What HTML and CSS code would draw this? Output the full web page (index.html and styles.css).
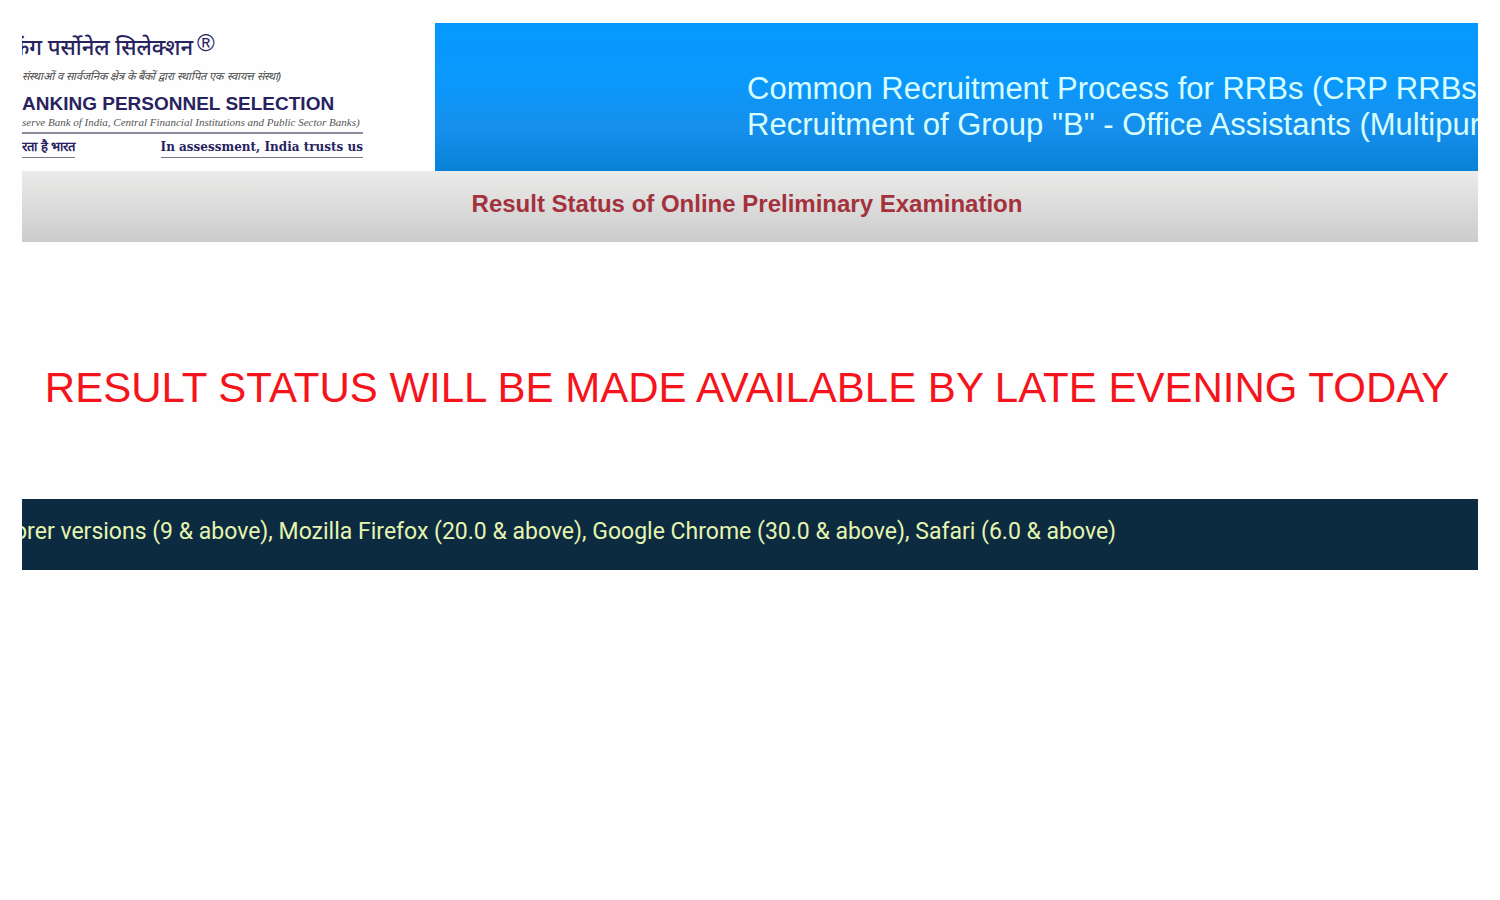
FILE: index.html
```
<!DOCTYPE html>
<html lang="en">
<head>
    <meta charset="UTF-8">
    <meta name="viewport" content="width=device-width, initial-scale=1.0">
    <title>Result Status of Online Preliminary Examination</title>
    <link rel="stylesheet" href="styles.css">
</head>
<body>
    <div class="page">
        <header class="header">
            <div class="logo">
                <p class="logo-hindi" lang="hi"><span class="cut">किंग</span> पर्सोनेल सिलेक्शन<sup>®</sup></p>
                <p class="logo-hindi-sub" lang="hi">संस्थाओं व सार्वजनिक क्षेत्र के बैंकों द्वारा स्थापित एक स्वायत्त संस्था)</p>
                <p class="logo-name">ANKING PERSONNEL SELECTION</p>
                <p class="logo-sub">serve Bank of India, Central Financial Institutions and Public Sector Banks)</p>
                <div class="logo-mottos">
                    <span class="motto-hindi" lang="hi">रता है भारत</span>
                    <span class="motto">In assessment, India trusts us</span>
                </div>
            </div>
            <div class="banner">
                <p class="banner-text">Common Recruitment Process for RRBs (CRP RRBs<br>Recruitment of Group "B" - Office Assistants (Multipur</p>
            </div>
        </header>

        <div class="title-bar">
            <h1>Result Status of Online Preliminary Examination</h1>
        </div>

        <main class="content">
            <p class="notice">RESULT STATUS WILL BE MADE AVAILABLE BY LATE EVENING TODAY</p>
        </main>

        <footer class="footer">
            <p><span class="cut-word">orer</span> versions (9 &amp; above), Mozilla Firefox (20.0 &amp; above), Google Chrome (30.0 &amp; above), Safari (6.0 &amp; above)</p>
        </footer>
    </div>
</body>
</html>
```
FILE: styles.css
```
body {
    margin: 0;
    background-color: #fefefe;
    font-family: "Liberation Sans", Arial, sans-serif;
}
p, h1 {
    margin: 0;
    white-space: nowrap;
}
.page {
    margin: 23px 22px;
}
.header {
    display: flex;
    height: 148px;
}
.logo {
    width: 413px;
    flex-shrink: 0;
    overflow: hidden;
    color: #28235f;
}
.logo-hindi {
    height: 42px;
    line-height: 54px;
    font-family: "Noto Sans Devanagari", "Noto Sans", "Liberation Sans", sans-serif;
    font-size: 22px;
    font-weight: 500;
}
.logo-hindi .cut {
    margin-left: -16px;
}
.logo-hindi sup {
    margin-left: 4px;
    font-family: "Liberation Sans", Arial, sans-serif;
    font-size: 24px;
    line-height: 0;
    vertical-align: 4px;
}
.logo-hindi-sub {
    height: 26px;
    line-height: 22px;
    color: #444;
    font-size: 11px;
    font-style: italic;
    font-weight: 500;
}
.logo-name {
    height: 24px;
    line-height: 26px;
    font-size: 19px;
    font-weight: bold;
}
.logo-sub {
    width: 341px;
    height: 17px;
    line-height: 14px;
    border-bottom: 2px solid #8c8c9c;
    color: #555;
    font-family: "Liberation Serif", "Times New Roman", serif;
    font-size: 11px;
    font-style: italic;
}
.logo-mottos {
    display: flex;
    justify-content: space-between;
    width: 341px;
    height: 24px;
    line-height: 26px;
    font-weight: bold;
    white-space: nowrap;
}
.logo-mottos span {
    border-bottom: 1px solid #77778c;
}
.motto-hindi {
    font-size: 13px;
}
.motto {
    font-family: "DejaVu Serif", serif;
    font-size: 12px;
}
.banner {
    flex: 1;
    min-width: 0;
    overflow: hidden;
    background: linear-gradient(#0599ff, #0b98fc 40%, #1690ec 70%, #0782d6);
}
.banner-text {
    padding: 48px 0 0 312px;
    color: #d8ffff;
    font-size: 31px;
    line-height: 36px;
}
.title-bar {
    height: 71px;
    background: linear-gradient(#ebebea, #cccccc);
    text-align: center;
}
.title-bar h1 {
    padding-right: 6px;
    color: #a3323d;
    font-size: 24px;
    line-height: 65px;
}
.content {
    padding: 116px 0 81px;
    text-align: center;
}
.notice {
    padding-right: 6px;
    color: #f5131c;
    font-size: 42px;
    line-height: 60px;
}
.footer {
    overflow: hidden;
    background-color: #0c2a40;
    color: #e5f5b0;
    font-family: Roboto, "Liberation Sans", sans-serif;
    font-size: 23px;
    line-height: 66px;
    padding-bottom: 5px;
}
.cut-word {
    margin-left: -8px;
}
```
